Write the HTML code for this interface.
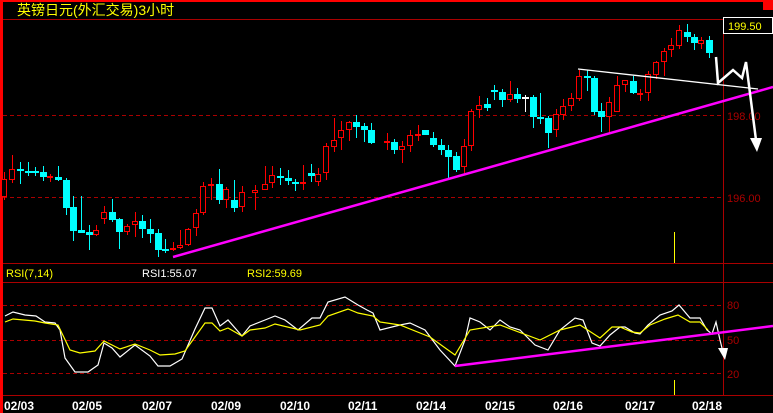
<!DOCTYPE html><html><head><meta charset="utf-8"><style>
html,body{margin:0;padding:0;background:#000;width:773px;height:413px;overflow:hidden}
svg{display:block}
text{font-family:"Liberation Sans","Noto Sans CJK SC",sans-serif}
</style></head><body>
<svg id="s" width="773" height="413" xmlns="http://www.w3.org/2000/svg" shape-rendering="crispEdges">
<rect x="0" y="0" width="773" height="413" fill="#000"/>
<rect x="0" y="0" width="773" height="2" fill="#f00"/>
<rect x="0" y="0" width="3" height="413" fill="#f00"/>
<rect x="763" y="0" width="10" height="10" fill="#f00"/>
<text x="17" y="15" fill="#ff0" font-size="14" font-family="'Liberation Sans','Noto Sans CJK SC',sans-serif">英镑日元(外汇交易)3小时</text>
<line x1="3" y1="19.5" x2="773" y2="19.5" stroke="#a00"/>
<line x1="723.5" y1="19" x2="723.5" y2="395" stroke="#a00"/>
<line x1="3" y1="263.5" x2="773" y2="263.5" stroke="#a00"/>
<line x1="3" y1="282.5" x2="773" y2="282.5" stroke="#a00"/>
<line x1="3" y1="395.5" x2="773" y2="395.5" stroke="#a00"/>
<g stroke="#a00" stroke-dasharray="4,3">
<line x1="3" y1="115.5" x2="723" y2="115.5"/><line x1="3" y1="197.5" x2="723" y2="197.5"/>
<line x1="3" y1="305.5" x2="723" y2="305.5"/><line x1="3" y1="340.5" x2="723" y2="340.5"/><line x1="3" y1="373.5" x2="723" y2="373.5"/>
</g>
<g fill="#a00" font-size="11">
<text x="727" y="120">198.00</text><text x="727" y="202">196.00</text>
<text x="727" y="309">80</text><text x="727" y="344">50</text><text x="727" y="378">20</text>
</g>
<rect x="723.5" y="17.5" width="49" height="16" fill="#000" stroke="#fff"/>
<text x="728" y="30" fill="#ff0" font-size="11">199.50</text>
<rect x="674" y="232" width="1" height="31" fill="#ff0"/>
<rect x="674" y="380" width="1" height="15" fill="#ff0"/>
<g id="c"></g>
<g shape-rendering="auto">
<polyline points="173,257 773,87" stroke="#f0f" stroke-width="2.5" fill="none"/>
<polyline points="578,69 758,89" stroke="#fff" stroke-width="1.3" fill="none"/>
<polyline points="716,57 718,83 733,70 742,78 746,62 756,140" stroke="#fff" stroke-width="2.5" fill="none"/>
<polygon points="750,138 762,138 757,152" fill="#fff"/>
<polyline id="w" fill="none" stroke="#fff" stroke-width="1.2" points="5,316 13,312 25,315 36,316 45,322 55,323 60,330 65,358 75,372 88,372 98,365 104,343 112,348 120,357 135,345 150,356 158,366 170,366 182,359 195,329 205,308 212,308 220,326 228,320 242,336 250,326 265,320 275,316 285,320 298,330 312,318 320,318 328,302 345,297 358,305 367,310 373,313 380,330 400,325 410,323 425,330 440,350 455,366 465,340 470,318 480,322 490,330 500,320 510,327 520,330 535,345 548,350 560,330 575,318 583,320 592,343 600,346 610,335 620,327 625,327 635,333 640,334 648,325 660,315 672,311 679,305 690,318 700,318 707,330 712,334 716,322 720,340 723,352"/>
<polyline fill="none" stroke="#ff0" stroke-width="1.2" points="5,322 13,319 35,321 45,323 58,325 70,350 80,353 95,351 104,341 120,349 135,344 150,350 160,355 175,354 185,351 205,323 212,323 220,331 228,328 242,336 250,330 265,328 275,324 300,330 320,325 328,316 348,309 358,313 373,316 380,322 400,325 430,337 455,355 470,330 500,325 540,340 560,330 580,325 600,338 612,327 620,327 632,332 640,333 650,325 665,319 678,315 690,322 700,322 708,330"/>
<polyline points="455,366 773,326" stroke="#f0f" stroke-width="2.5" fill="none"/>
<polygon points="718,348 728,348 725,360" fill="#fff"/>
</g>
<g font-size="11">
<text x="6" y="277" fill="#ff0">RSI(7,14)</text>
<text x="142" y="277" fill="#fff">RSI1:55.07</text>
<text x="247" y="277" fill="#ff0">RSI2:59.69</text>
</g>
<g fill="#fff" font-size="12" font-weight="bold" font-family="'Liberation Mono',monospace">
<text x="4" y="410">02/03</text><text x="72" y="410">02/05</text><text x="142" y="410">02/07</text><text x="211" y="410">02/09</text><text x="280" y="410">02/10</text><text x="348" y="410">02/11</text><text x="416" y="410">02/14</text><text x="485" y="410">02/15</text><text x="553" y="410">02/16</text><text x="625" y="410">02/17</text><text x="692" y="410">02/18</text>
</g>
</svg>
<script>
var d=[[4,'r',179,197,172,200],[12,'r',169,180,155,183],[20,'c',169,171,162,184],[28,'c',171,173,162,176],[35,'c',171,173,167,176],[43,'c',172,177,166,181],[50,'r',176,178,174,182],[58,'c',177,180,166,181],[66,'c',180,208,178,215],[73,'c',207,231,196,241],[81,'c',230,233,196,233],[89,'c',232,235,225,250],[96,'r',230,235,225,236],[104,'r',212,219,206,224],[112,'c',212,220,199,222],[119,'c',219,232,218,249],[127,'r',226,232,224,235],[135,'r',221,225,212,237],[142,'c',221,229,215,238],[150,'c',229,234,219,243],[158,'c',233,250,229,257],[165,'c',249,250,239,253],[173,'r',248,249,242,251],[180,'r',245,248,230,249],[188,'r',229,245,228,246],[196,'r',213,228,209,236],[203,'r',186,213,182,215],[211,'r',184,186,178,200],[219,'c',184,200,169,204],[226,'r',189,200,187,208],[234,'c',200,208,180,212],[242,'r',192,207,186,212],[255,'r',190,193,185,210],[265,'r',184,190,166,190],[272,'r',175,183,166,188],[280,'c',176,177,168,185],[288,'c',178,181,170,185],[295,'c',182,183,179,191],[303,'r',182,184,165,190],[311,'c',173,176,164,182],[318,'r',174,182,168,186],[326,'r',146,173,143,180],[334,'r',140,147,118,152],[341,'r',130,138,121,150],[349,'r',122,130,121,141],[356,'c',122,127,115,138],[364,'c',126,130,123,142],[371,'c',130,143,123,144],[387,'r',141,142,133,150],[394,'c',142,150,139,154],[402,'r',146,150,141,163],[410,'r',135,146,130,152],[418,'r',134,135,125,141],[425,'c',130,135,130,135],[433,'c',138,145,132,147],[441,'c',145,150,139,155],[448,'c',150,157,145,179],[456,'c',156,170,152,172],[464,'r',146,167,139,173],[471,'r',111,146,109,151],[479,'r',105,110,96,118],[487,'c',104,108,98,111],[494,'c',90,91,85,100],[502,'c',92,100,89,107],[510,'r',94,100,81,102],[517,'c',94,99,88,103],[525,'w',97,98,95,112],[533,'c',97,117,95,128],[540,'c',117,119,93,124],[548,'c',118,133,116,148],[556,'r',114,130,109,137],[563,'r',106,115,99,120],[571,'r',98,106,93,111],[579,'r',76,99,70,101],[587,'c',76,78,70,91],[594,'c',78,112,76,115],[601,'c',111,117,103,132],[609,'r',102,117,97,133],[617,'r',85,112,76,112],[625,'r',80,85,80,92],[633,'c',81,93,76,94],[640,'r',93,95,89,101],[648,'r',74,93,71,101],[656,'r',62,75,61,79],[664,'r',51,62,48,76],[671,'r',45,50,38,57],[679,'r',30,46,25,49],[687,'c',32,37,24,42],[694,'c',37,43,34,50],[701,'r',40,44,37,49],[709,'c',40,53,36,58]];
var h='';d.forEach(function(a){var x=a[0],t=a[1],col=t=='r'?'#f00':t=='c'?'#0ff':'#fff';
h+='<rect x="'+x+'" y="'+a[4]+'" width="1" height="'+(a[5]-a[4])+'" fill="'+col+'"/>';
var hh=Math.max(1,a[3]-a[2]);
if(t=='r')h+='<rect x="'+(x-2.5)+'" y="'+(a[2]+.5)+'" width="5" height="'+Math.max(1,hh-1)+'" fill="#000" stroke="#f00"/>';
else h+='<rect x="'+(x-3)+'" y="'+a[2]+'" width="7" height="'+(hh<2?2:hh)+'" fill="'+col+'"/>';});
document.getElementById('c').innerHTML=h;
</script>
</body></html>
